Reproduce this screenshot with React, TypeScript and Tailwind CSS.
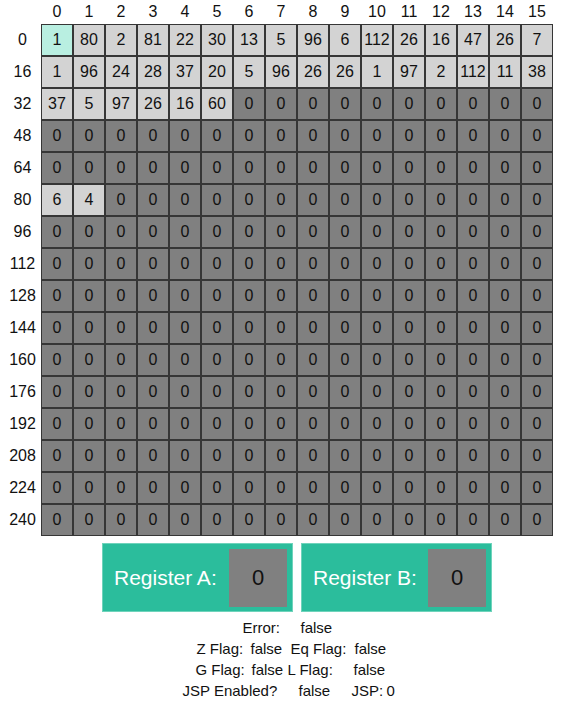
import React from "react";

const rows: number[][] = Array.from({ length: 16 }, () => Array(16).fill(0));
rows[0] = [1, 80, 2, 81, 22, 30, 13, 5, 96, 6, 112, 26, 16, 47, 26, 7];
rows[1] = [1, 96, 24, 28, 37, 20, 5, 96, 26, 26, 1, 97, 2, 112, 11, 38];
rows[2] = [37, 5, 97, 26, 16, 60, 0, 0, 0, 0, 0, 0, 0, 0, 0, 0];
rows[5] = [6, 4, 0, 0, 0, 0, 0, 0, 0, 0, 0, 0, 0, 0, 0, 0];

function Register({ name }: { name: string }) {
  return (
    <div className="flex h-[69px] w-[191px] items-center justify-between border border-[#6fd3bb] bg-[#2bbd9c] pl-[11px] pr-[5px]">
      <span className="text-[21px] text-white">{name}</span>
      <div className="flex h-[58px] w-[58px] items-center justify-center bg-[#808080] text-[22px] text-[#111]">0</div>
    </div>
  );
}

export default function App() {
  return (
    <div className="w-[573px] bg-white text-[#111]" style={{ fontFamily: '"Liberation Sans", Arial, sans-serif' }}>
      <div className="w-[553px]">
        <div className="flex h-[24px] items-center text-[16px]">
          <div className="w-[41px]" />
          <div className="flex gap-[2px] pl-[1px]">
            {Array.from({ length: 16 }, (_, i) => (
              <div key={i} className="w-[30px] text-center">{i}</div>
            ))}
          </div>
        </div>
        <div className="flex">
          <div className="flex w-[41px] flex-col gap-[2px] pt-[1px] text-[16px]">
            {rows.map((_, r) => (
              <div key={r} className="flex h-[30px] items-center justify-center pl-[4px]">{r * 16}</div>
            ))}
          </div>
          <div className="grid grid-cols-[repeat(16,30px)] gap-[2px] bg-[#363636] p-[1px] text-[16px]">
            {rows.map((row, r) =>
              row.map((v, c) => {
                const bg =
                  r === 0 && c === 0 ? "bg-[#b9efe1]" : v !== 0 ? "bg-[#d3d3d3]" : "bg-[#808080]";
                return (
                  <div key={`${r}-${c}`} className={`flex h-[30px] items-center justify-center ${bg}`}>
                    {v}
                  </div>
                );
              })
            )}
          </div>
        </div>
      </div>
      <div className="ml-[41px] mt-[7px] flex w-[512px] justify-center gap-[8px]">
        <Register name="Register A:" />
        <Register name="Register B:" />
      </div>
      <div className="mt-[5px] flex justify-center pl-[8px] text-[15px] leading-[21px]">
        <div className="w-[216px]">
          <div className="flex pl-[60px]">
            <span className="w-[58px]">Error:</span>
            <span>false</span>
          </div>
          <div className="flex pl-[14px]">
            <span className="w-[54px]">Z Flag:</span>
            <span className="w-[40px]">false</span>
            <span className="w-[64px]">Eq Flag:</span>
            <span>false</span>
          </div>
          <div className="flex pl-[13px]">
            <span className="w-[56px]">G Flag:</span>
            <span className="w-[36px]">false</span>
            <span className="w-[66px]">L Flag:</span>
            <span>false</span>
          </div>
          <div className="flex">
            <span className="w-[116px]">JSP Enabled?</span>
            <span className="w-[53px]">false</span>
            <span className="w-[35px]">JSP:</span>
            <span>0</span>
          </div>
        </div>
      </div>
    </div>
  );
}
